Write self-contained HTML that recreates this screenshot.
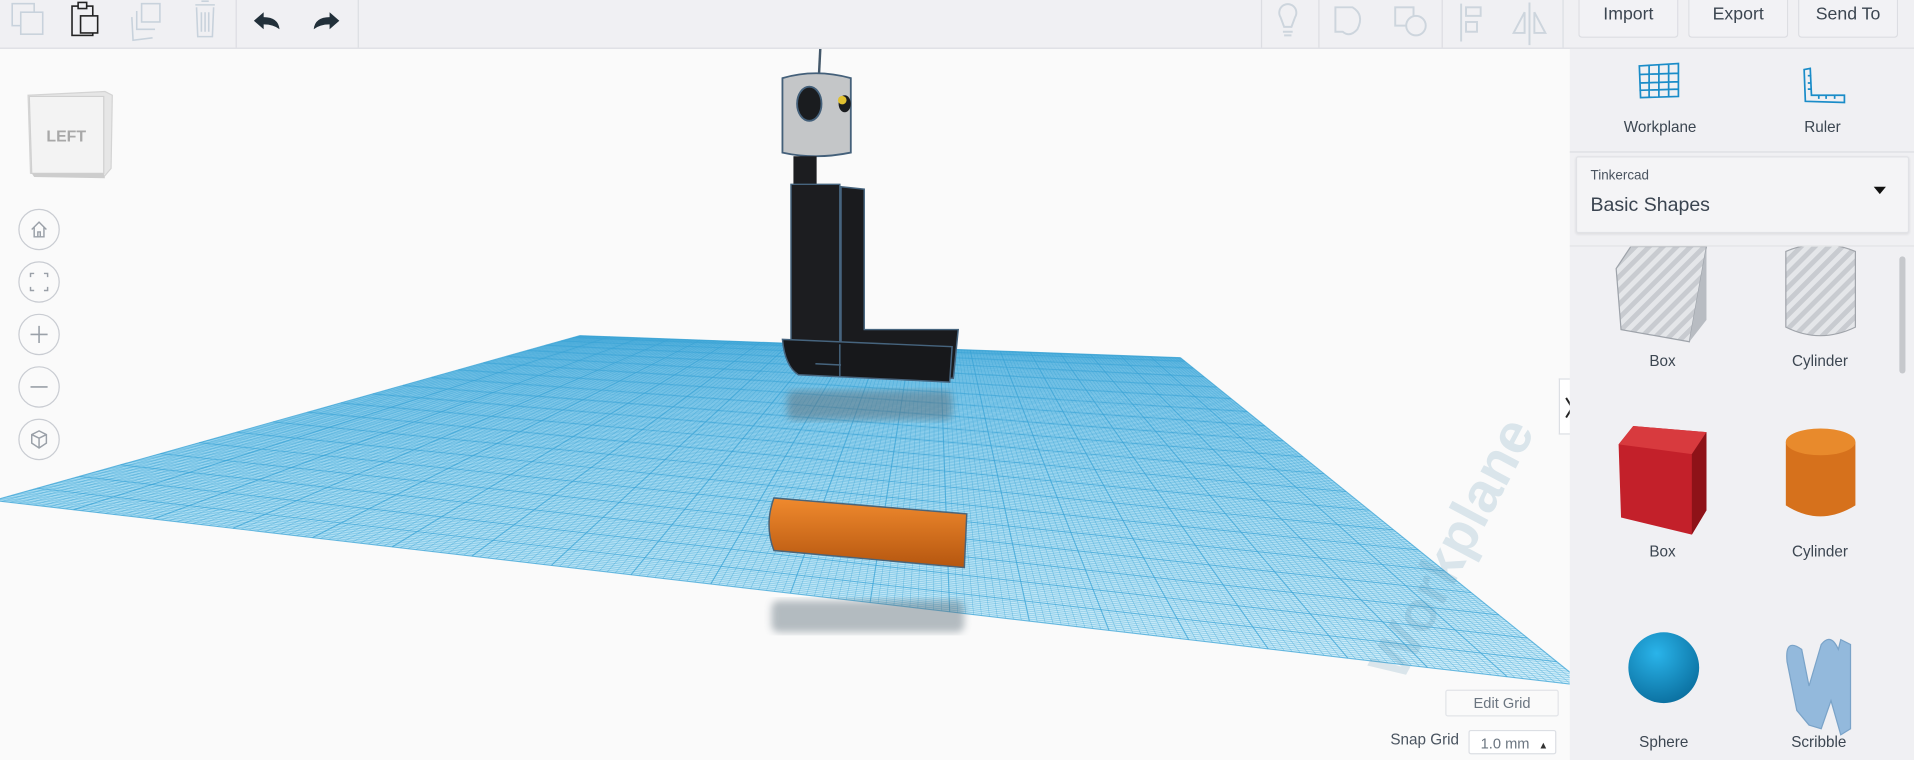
<!DOCTYPE html>
<html><head><meta charset="utf-8">
<style>
html,body{margin:0;padding:0;width:1914px;height:760px;overflow:hidden;background:#fafafa;font-family:"Liberation Sans",sans-serif}
#w{position:absolute;left:0;top:0;width:1568px;height:623px;transform:scale(1.22066);transform-origin:0 0;background:#fafafa;overflow:hidden}
.hdr{position:absolute;left:0;top:0;width:1568px;height:39px;background:#f0f0f3;border-bottom:1px solid #dcdde2}
.div{position:absolute;top:0;width:1px;height:39px;background:#dcdde2}
.btn{position:absolute;top:0;height:30px;width:80px;border:1px solid #dcdde2;border-top:none;border-radius:0 0 3px 3px;background:#f2f2f5;font-size:14.5px;color:#3c4651;text-align:center;line-height:25px}
.panel{position:absolute;left:1286px;top:40px;width:282px;height:583px;background:#f0f0f3}
.lbl{position:absolute;font-size:12.5px;color:#3c4651;text-align:center;width:120px}
.circ{position:absolute;left:15px;width:32px;height:32px;border:1px solid #c9ccd2;border-radius:50%;background:#fafafa}
</style></head><body>
<div id="w">
<svg id="grid" width="1286" height="623" style="position:absolute;left:0;top:0">
<defs>
<linearGradient id="gf" x1="0" y1="0" x2="0" y2="1"><stop offset="0" stop-color="#7cc6ea"/><stop offset="0.45" stop-color="#a8dcf2"/><stop offset="1" stop-color="#d2eef9"/></linearGradient>
<filter id="bl"><feGaussianBlur stdDeviation="3"/></filter>
</defs>
<polygon points="475,275 967,293 1300,562 -5,410" fill="url(#gf)"/>
<g id="gl" stroke="#3aa3d6" fill="none"></g>
<text x="0" y="0" transform="translate(1148,560) rotate(-62)" font-size="46" font-weight="bold" fill="#5a8fb0" fill-opacity="0.2" font-family="Liberation Sans,sans-serif">Workplane</text>
<rect x="645" y="320" width="135" height="24" rx="6" fill="#5f6f7a" opacity="0.5" filter="url(#bl)"/>
<rect x="632" y="492" width="158" height="26" rx="6" fill="#5f6f7a" opacity="0.45" filter="url(#bl)"/>
<!-- robot -->
<line x1="672" y1="40" x2="671" y2="60" stroke="#44586a" stroke-width="2"/>
<path d="M641,64 Q668,56 697,64 L697,125 Q668,131 641,125 Z" fill="#c4c6c8" stroke="#44607a" stroke-width="1.5"/>
<ellipse cx="663" cy="85" rx="10" ry="14" fill="#1a1c1f" stroke="#44607a" stroke-width="1.5"/>
<ellipse cx="692" cy="85" rx="5" ry="7" fill="#1a1c1f"/>
<circle cx="690" cy="82" r="3.5" fill="#e0c030"/>
<rect x="650" y="128" width="19" height="26" fill="#1c1d20"/>
<path d="M689,153 L708,155 L708,270 L785,270 L781,310 L689,307 Z" fill="#1a1b1e" stroke="#46647e" stroke-width="1.2"/>
<path d="M648,151 L688,151 L688,282 L648,282 Z" fill="#1c1d20" stroke="#46647e" stroke-width="1.2"/>
<path d="M641,278 L780,284 L778,313 L654,307 Q643,300 641,278 Z" fill="#17181b" stroke="#46647e" stroke-width="1.2"/>
<path d="M688,282 L688,308 M668,298 L689,299" stroke="#46647e" stroke-width="1.2"/>
<!-- orange cylinder -->
<defs><linearGradient id="og" x1="0" y1="0" x2="0" y2="1"><stop offset="0" stop-color="#f08a2e"/><stop offset="1" stop-color="#b5560f"/></linearGradient></defs>
<path d="M634,408 L792,421 L790,465 L634,451 Q626,430 634,408 Z" fill="url(#og)" stroke="#4a6479" stroke-width="1.2"/>
</svg>
<!-- header -->
<div class="hdr">
<svg width="1568" height="39" style="position:absolute;left:0;top:0" fill="none" stroke-width="1.3">
<g stroke="#c8d2dc"><rect x="10" y="3" width="18" height="18"/><rect x="17" y="10" width="18" height="18" fill="#f0f0f3"/></g>
<g stroke="#222"><rect x="59" y="5" width="17" height="24"/><rect x="64" y="2" width="7" height="5" fill="#f0f0f3"/><rect x="66" y="13" width="14" height="14" fill="#f0f0f3"/></g>
<g stroke="#c8d2dc"><rect x="116" y="3" width="15" height="15"/><path d="M112,9 L112,24 L127,24 M108,14 L109,33 L125,31"/></g>
<g stroke="#c8d2dc"><path d="M160,4 L176,4 M165,1 L171,1 M161,6 L162,30 L174,30 L175,6 M165,10 L165,26 M168,10 L168,26 M171,10 L171,26"/></g>
<path d="M208,17 L216,10 L216,14 Q228,14 229,24 Q224,20 216,20 L216,24 Z" fill="#22303a" stroke="none"/>
<path d="M278,17 L270,10 L270,14 Q258,14 257,24 Q262,20 270,20 L270,24 Z" fill="#22303a" stroke="none"/>
<g stroke="#cdd5dd" stroke-width="1.6">
<path d="M1049,14 a7,7 0 1 1 12,0 L1058,22 L1052,22 Z M1051,26 L1059,26 M1052,29 L1058,29"/>
<path d="M1094,6 L1108,6 Q1118,12 1112,24 Q1106,31 1100,26 L1094,26 Z"/>
<rect x="1143" y="6" width="15" height="15"/><circle cx="1160" cy="21" r="8" fill="#f0f0f3"/>
<path d="M1197,3 L1197,34"/><rect x="1201" y="6" width="12" height="7"/><rect x="1201" y="18" width="9" height="8"/>
<path d="M1253,2 L1253,37 M1249,10 L1240,27 L1249,27 Z M1257,10 L1266,27 L1257,27 Z"/>
</g>
</svg>
<div class="div" style="left:193px"></div><div class="div" style="left:293px"></div>
<div class="div" style="left:1033px"></div><div class="div" style="left:1080px"></div><div class="div" style="left:1181px"></div><div class="div" style="left:1280px"></div>
<div class="btn" style="left:1293px">Import</div>
<div class="btn" style="left:1383px">Export</div>
<div class="btn" style="left:1473px">Send To</div>
</div>
<!-- view cube -->
<svg width="80" height="85" style="position:absolute;left:20px;top:70px">
<polygon points="3,8 66,5 72,8 71,68 65,75 5,72" fill="#e6e6e6" stroke="#d4d4d4"/>
<polygon points="4,9 65,9 65,72 6,72" fill="#f3f3f3" stroke="#d0d0d0"/>
<polygon points="6,72 65,72 66,76 8,75" fill="#cdcdcd"/>
<text x="18" y="46" font-size="13" font-weight="bold" fill="#a8a8a8" font-family="Liberation Sans,sans-serif">LEFT</text>
</svg>
<div class="circ" style="top:171px"><svg width="32" height="32" fill="none" stroke="#9aa0a8" stroke-width="1.2"><path d="M10,16 L16,10 L22,16 M12,14 L12,22 L20,22 L20,14 M15,22 L15,18 L17,18 L17,22"/></svg></div>
<div class="circ" style="top:214px"><svg width="32" height="32" fill="none" stroke="#9aa0a8" stroke-width="1.2"><path d="M9,12 L9,9 L12,9 M20,9 L23,9 L23,12 M23,20 L23,23 L20,23 M12,23 L9,23 L9,20"/></svg></div>
<div class="circ" style="top:257px"><svg width="32" height="32" fill="none" stroke="#9aa0a8" stroke-width="1.3"><path d="M16,9 L16,23 M9,16 L23,16"/></svg></div>
<div class="circ" style="top:300px"><svg width="32" height="32" fill="none" stroke="#9aa0a8" stroke-width="1.3"><path d="M9,16 L23,16"/></svg></div>
<div class="circ" style="top:343px"><svg width="32" height="32" fill="none" stroke="#9aa0a8" stroke-width="1.2"><path d="M16,9 L22,12 L22,19 L16,23 L10,19 L10,12 Z M10,12 L16,15 L22,12 M16,15 L16,23"/></svg></div>
<!-- edit grid -->
<div style="position:absolute;left:1184px;top:565px;width:91px;height:20px;border:1px solid #e2e4e8;border-radius:2px;background:#fafafa;font-size:12px;color:#6b7580;text-align:center;line-height:20px">Edit Grid</div>
<div style="position:absolute;left:1139px;top:599px;font-size:12.5px;color:#4a5460">Snap Grid</div>
<div style="position:absolute;left:1203px;top:598px;width:72px;height:20px;border:1px solid #dcdfe4;border-radius:2px;background:#fff;font-size:12px;color:#6b7580;line-height:20px;padding-left:9px;box-sizing:border-box">1.0 mm <span style="font-size:8px;color:#333;margin-left:4px">▲</span></div>
<!-- collapse tab -->
<div style="position:absolute;left:1277px;top:310px;width:15px;height:46px;background:#fff;border:1px solid #dcdfe4;border-right:none;box-sizing:border-box"><svg width="15" height="46"><path d="M5,15 L10,23 L5,31" fill="none" stroke="#222" stroke-width="1.6"/></svg></div>
<!-- panel -->
<div class="panel">
<svg width="282" height="90" style="position:absolute;left:0;top:0" fill="none" stroke="#1a8cc8" stroke-width="1.4">
<path d="M57,14 L89,12 L89,39 L58,40 Z M57,21 L89,20 M57,28 L89,27 M57,34 L89,33 M65,13 L65,40 M73,13 L73,40 M81,12 L81,40"/>
<path d="M192,17 L197,16 L198,38 L225,38 L225,44 L193,43 Z M198,22 L195,22 M198,28 L195,28 M198,33 L195,33 M204,38 L204,41 M210,38 L210,41 M217,38 L217,41"/>
</svg>
<div class="lbl" style="left:14px;top:57px">Workplane</div>
<div class="lbl" style="left:147px;top:57px">Ruler</div>
<div style="position:absolute;left:0;top:84px;width:282px;height:1px;background:#dcdde2"></div>
<div style="position:absolute;left:5px;top:88px;width:271px;height:61px;background:#f4f4f6;border:1px solid #e1e2e6;border-radius:2px;box-shadow:0 1px 2px rgba(0,0,0,0.08)">
<div style="position:absolute;left:11px;top:9px;font-size:11px;color:#4a5460">Tinkercad</div>
<div style="position:absolute;left:11px;top:31px;font-size:16px;color:#3a4450">Basic Shapes</div>
<div style="position:absolute;left:243px;top:24px;width:0;height:0;border-left:5px solid transparent;border-right:5px solid transparent;border-top:6px solid #111"></div>
</div>
<div style="position:absolute;left:0;top:161px;width:282px;height:1px;background:#e2e3e6"></div>
<div style="position:absolute;left:270px;top:170px;width:5px;height:96px;border-radius:3px;background:#c6c8cc"></div>
<svg width="270" height="420" style="position:absolute;left:0;top:162px">
<defs>
<pattern id="st" width="8" height="8" patternUnits="userSpaceOnUse" patternTransform="rotate(45)"><rect width="8" height="8" fill="#c8cbd0"/><rect width="4" height="8" fill="#e4e6e9"/></pattern>
<radialGradient id="sp" cx="0.4" cy="0.3" r="0.75"><stop offset="0" stop-color="#2ab4ea"/><stop offset="1" stop-color="#0a6e9e"/></radialGradient>
</defs>
<path d="M38,18 L50,0 L112,0 L98,78 L42,68 Z" fill="url(#st)" stroke="#9ea3aa"/>
<path d="M98,78 L112,0 L112,60 Z" fill="#b8bcc2"/>
<path d="M177,4 Q205,-8 234,4 L234,66 Q205,80 177,66 Z" fill="url(#st)" stroke="#a0a4aa"/>
<path d="M40,162 L52,147 L112,152 L112,216 L100,236 L42,222 Z" fill="#c3202a"/>
<path d="M40,162 L52,147 L112,152 L100,170 Z" fill="#d83a3e"/>
<path d="M100,170 L112,152 L112,216 L100,236 Z" fill="#8e1218"/>
<path d="M177,160 Q205,146 234,160 L234,212 Q205,230 177,212 Z" fill="#d6711c"/>
<ellipse cx="205.5" cy="160" rx="28.5" ry="11" fill="#e88a2c"/>
<circle cx="77" cy="345" r="29" fill="url(#sp)"/>
<path d="M178,340 Q176,320 190,330 L196,360 L206,326 Q214,316 220,330 L222,322 L230,326 L230,395 L222,400 L214,372 L206,395 L196,392 L186,380 Z" fill="#93b9dc" stroke="#7aa3c8"/>
</svg>
<div class="lbl" style="left:16px;top:249px">Box</div>
<div class="lbl" style="left:145px;top:249px">Cylinder</div>
<div class="lbl" style="left:16px;top:405px">Box</div>
<div class="lbl" style="left:145px;top:405px">Cylinder</div>
<div class="lbl" style="left:17px;top:561px">Sphere</div>
<div class="lbl" style="left:144px;top:561px">Scribble</div>
</div>
</div>
<script>
(function(){
var A=[475,275],B=[967,293],C=[1300,562],D=[-5,410];
function L(p,q,t){return [p[0]+(q[0]-p[0])*t,p[1]+(q[1]-p[1])*t];}
var g=document.getElementById('gl'),s='';
var N=200;
for(var i=0;i<=N;i++){var t=i/N;var P=L(A,B,t),Q=L(D,C,t);var m=(i%10==0);
s+='<line x1="'+P[0].toFixed(1)+'" y1="'+P[1].toFixed(1)+'" x2="'+Q[0].toFixed(1)+'" y2="'+Q[1].toFixed(1)+'" stroke-width="'+(m?0.9:0.5)+'" stroke-opacity="'+(m?0.75:0.5)+'"/>';}
for(var j=0;j<=N;j++){var u=j/N;var v=Math.pow(u,1.5);var P=L(A,D,v),Q=L(B,C,v);var m=(j%10==0);
s+='<line x1="'+P[0].toFixed(1)+'" y1="'+P[1].toFixed(1)+'" x2="'+Q[0].toFixed(1)+'" y2="'+Q[1].toFixed(1)+'" stroke-width="'+(m?0.9:0.5)+'" stroke-opacity="'+(m?0.75:0.5)+'"/>';}
g.innerHTML=s;
})();
</script>
</body></html>
